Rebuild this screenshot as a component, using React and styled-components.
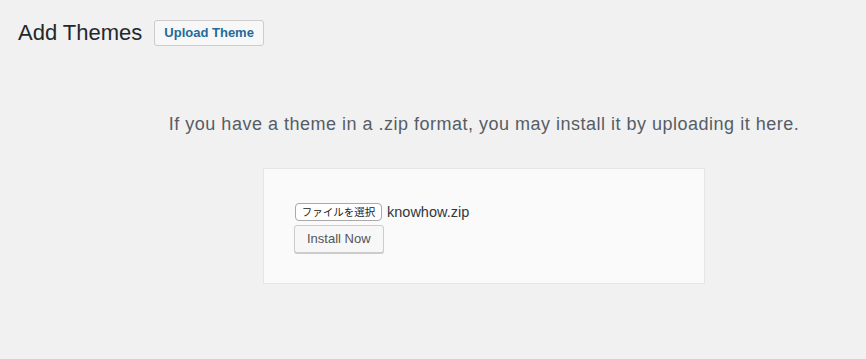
import React from "react";
import styled, { createGlobalStyle } from "styled-components";

const GlobalStyle = createGlobalStyle`
  html, body {
    margin: 0;
    padding: 0;
    background: #f1f1f1;
  }
  body {
    font-family: "Liberation Sans", Arial, sans-serif;
    color: #23282d;
  }
  * { box-sizing: border-box; }
`;

const Page = styled.div`
  min-height: 359px;
  background: #f1f1f1;
`;

const Header = styled.div`
  display: flex;
  align-items: center;
  gap: 12px;
  padding: 18px 0 0 18px;
`;

const Title = styled.h1`
  margin: 0;
  font-size: 22px;
  line-height: 29px;
  font-weight: 400;
  color: #23282d;
`;

const HeaderButton = styled.button`
  height: 26px;
  padding: 0 9px;
  border: 1px solid #ccc;
  border-radius: 3px;
  background: #f7f7f7;
  color: #1f6b9a;
  font-family: "Liberation Sans", Arial, sans-serif;
  font-size: 13px;
  font-weight: 700;
  line-height: 24px;
  cursor: pointer;
`;

const UploadSection = styled.section`
  padding: 65px 0 0 102px;
`;

const Help = styled.p`
  margin: 0 0 31px;
  text-align: center;
  font-size: 18px;
  letter-spacing: 0.5px;
  line-height: 25px;
  color: #555d66;
`;

const UploadForm = styled.form`
  width: 442px;
  margin: 0 auto;
  padding: 30px;
  background: #fafafa;
  border: 1px solid #e5e5e5;
`;

const FileRow = styled.div`
  display: flex;
  align-items: center;
  gap: 5px;
  height: 26px;
`;

const FileButton = styled.span`
  display: inline-flex;
  align-items: center;
  justify-content: center;
  width: 87px;
  height: 18px;
  margin-left: 1px;
  border: 1px solid #a9a9a9;
  border-radius: 4px;
  background: #fff;
  color: #222;
  font-family: "Noto Sans CJK JP", sans-serif;
  font-size: 10.5px;
  line-height: 16px;
`;

const FileName = styled.span`
  font-size: 14.5px;
  color: #32373c;
`;

const SubmitButton = styled.button`
  display: block;
  height: 28px;
  padding: 0 12px 1px;
  border: 1px solid #ccc;
  border-radius: 3px;
  background: #f7f7f7;
  box-shadow: 0 1px 0 #ccc;
  color: #555;
  font-family: "Liberation Sans", Arial, sans-serif;
  font-size: 13px;
  line-height: 26px;
  cursor: pointer;
`;

export default function App() {
  return (
    <Page>
      <GlobalStyle />
      <Header>
        <Title>Add Themes</Title>
        <HeaderButton type="button">Upload Theme</HeaderButton>
      </Header>
      <UploadSection>
        <Help>
          If you have a theme in a .zip format, you may install it by uploading it here.
        </Help>
        <UploadForm onSubmit={(e) => e.preventDefault()}>
          <FileRow>
            <FileButton>ファイルを選択</FileButton>
            <FileName>knowhow.zip</FileName>
          </FileRow>
          <SubmitButton type="submit">Install Now</SubmitButton>
        </UploadForm>
      </UploadSection>
    </Page>
  );
}
